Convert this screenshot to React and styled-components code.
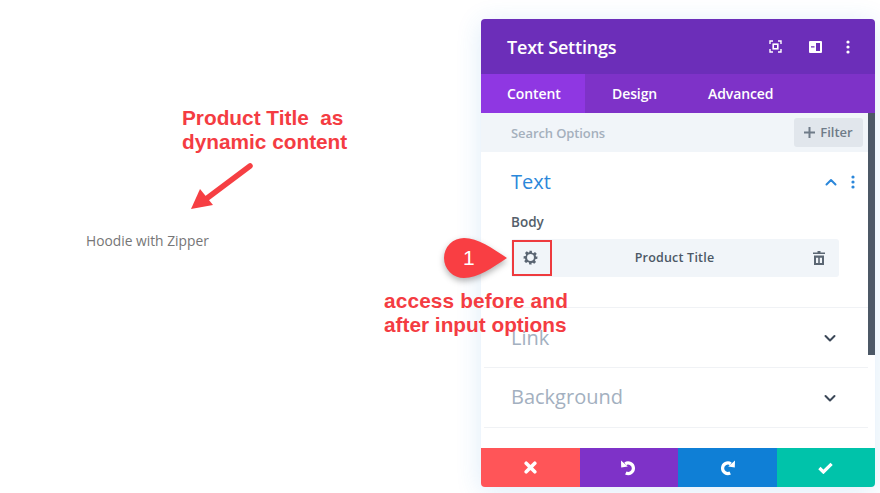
import React from "react";
import styled, { createGlobalStyle } from "styled-components";

const Global = createGlobalStyle`
  html, body { margin: 0; padding: 0; background: #fff; }
  #root { width: 880px; height: 493px; overflow: hidden; }
`;
const Page = styled.div`
  position: relative; width: 880px; height: 493px; background: #fff; overflow: hidden;
  font-family: "Open Sans", sans-serif;
`;
const Panel = styled.section`
  position: absolute; left: 481px; top: 19px; width: 394px; height: 468px;
  display: flex; flex-direction: column; border-radius: 4px; overflow: hidden;
  background: #fff; box-shadow: 0 4px 26px rgba(43,135,218,.16);
`;
const Header = styled.header`
  height: 55px; flex: none; background: #6c2eb9; display: flex; align-items: center;
  padding: 0 25px 0 26px; color: #fff;
`;
const Title = styled.h1`
  flex: 1; margin: 0; font-size: 18px; font-weight: 600; letter-spacing: -.2px;
`;
const HeaderIcons = styled.div`
  display: flex; align-items: center; gap: 27px;
  svg { display: block; }
  svg:last-child { margin-left: -3px; }
`;
const Tabs = styled.nav`height: 39px; flex: none; background: #7e32c8; display: flex;`;
const Tab = styled.div`
  display: flex; align-items: center; color: #fff; font-size: 14px; font-weight: 600; letter-spacing: -.1px;
  padding: ${p => p.$active ? "0 26px" : "0 27px"};
  width: ${p => p.$w}px; box-sizing: border-box;
  background: ${p => p.$active ? "#8f37e2" : "transparent"};
`;
const Scroller = styled.div`flex: 1; position: relative; min-height: 0; display: flex; flex-direction: column;`;
const Thumb = styled.div`
  position: absolute; right: 0; top: 0; width: 7px; height: 242px; background: #4c5866;
`;
const SearchBar = styled.div`
  height: 39px; flex: none; box-sizing: border-box; margin-right: 7px; background: #f1f5f9;
  display: flex; align-items: center; justify-content: space-between; padding: 0 5px 0 30px;
`;
const SearchText = styled.span`font-size: 13px; font-weight: 600; color: #a5b0bd; letter-spacing: -.1px;`;
const Filter = styled.div`
  width: 69px; height: 29px; border-radius: 3px; background: #e1e6ec; color: #6f7b88;
  display: flex; align-items: center; justify-content: center; gap: 5px;
  font-size: 13px; font-weight: 600; position: relative; top: -.5px;
`;
const Group = styled.div`
  margin: 0 7px 0 3px; border-bottom: 1px solid #f0f2f5; box-sizing: border-box;
  height: ${p => p.$h}px; padding: 0 0 0 27px; flex: none;
`;
const GroupHead = styled.div`
  display: flex; align-items: center; justify-content: space-between; height: ${p => p.$h}px;
  padding-right: ${p => p.$pr}px;
`;
const GroupTitle = styled.h2`
  margin: 0 0 ${p => p.$active ? 0 : 2}px; font-size: 20px; font-weight: 400;
  color: ${p => p.$active ? "#2b87da" : "#a3b0c0"};
`;
const HeadIcons = styled.div`display: flex; align-items: center; gap: 14px; svg { display: block; }`;
const Label = styled.div`font-size: 13.5px; font-weight: 600; color: #555f6b; margin-top: 2px; height: 18px; line-height: 18px;`;
const InputRow = styled.div`
  margin-top: 8px; height: 38px; width: 328px; background: #f1f5f9; border-radius: 3px;
  display: flex; align-items: center; box-sizing: border-box; padding-bottom: 2px;
`;
const InputIcon = styled.div`
  width: 39px; flex: none; display: flex; align-items: center; justify-content: center;
  svg { display: block; }
`;
const InputText = styled.div`
  flex: 1; text-align: center; font-size: 12.5px; font-weight: 600; color: #4c5866; letter-spacing: .2px;
`;
const Trash = styled.div`width: 40px; display: flex; justify-content: center; margin-top: 2px; svg { display: block; }`;
const Footer = styled.footer`height: 39px; flex: none; display: flex;`;
const FootBtn = styled.div`
  flex: 1; display: flex; align-items: center; justify-content: center; background: ${p => p.$bg};
  svg { display: block; }
`;
const RedBox = styled.div`
  position: absolute; left: 512px; top: 240px; width: 40px; height: 36px; box-sizing: border-box;
  border: 2.5px solid #ee3a3e;
`;
const Note = styled.div`
  position: absolute; left: ${p => p.$x}px; top: ${p => p.$y}px; color: #f43c42;
  font-family: "Liberation Sans", Arial, sans-serif; font-weight: 700; white-space: pre;
  font-size: 20.8px; line-height: 24px;
`;
const NoteLine = styled.div`letter-spacing: ${p => p.$ls || 0}px;`;
const Product = styled.div`
  position: absolute; left: 86px; top: 232px; font-size: 13.8px; line-height: 18px; color: #767676;
`;
const Arrow = styled.svg`position: absolute; left: 185px; top: 158px;`;
const Bubble = styled.svg`position: absolute; left: 440px; top: 234px; overflow: visible;`;
const BubbleNum = styled.div`
  position: absolute; left: 463px; top: 246px; color: #fff; font-family: "Liberation Sans", Arial, sans-serif;
  font-size: 21px; line-height: 24px;
`;

const Chevron = ({ up, color = "#3c4858" }) => (
  <svg width="12" height="8" viewBox="0 0 12 8" fill="none" stroke={color} strokeWidth="2" strokeLinecap="round" strokeLinejoin="round">
    <path d={up ? "M1.5 6.5 6 2l4.5 4.5" : "M1.5 2 6 6.5 10.5 2"} />
  </svg>
);
const Dots = ({ color = "#fff" }) => (
  <svg width="4" height="14" viewBox="0 0 4 14" fill={color}>
    <circle cx="2" cy="2" r="1.6" /><circle cx="2" cy="7" r="1.6" /><circle cx="2" cy="12" r="1.6" />
  </svg>
);

export default function App() {
  return (
    <Page>
      <Global />
      <Note $x={182} $y={106}>
        <NoteLine>{"Product Title  as"}</NoteLine>
        <NoteLine>dynamic content</NoteLine>
      </Note>
      <Arrow width="72" height="56" viewBox="0 0 72 56">
        <path d="M65 8 21 41" stroke="#f63f43" strokeWidth="5.5" strokeLinecap="round" fill="none" />
        <path d="M6 51 15 31 28 47Z" fill="#f63f43" />
      </Arrow>
      <Product>Hoodie with Zipper</Product>
      <Panel>
        <Header>
          <Title>Text Settings</Title>
          <HeaderIcons>
            <svg width="13" height="13" viewBox="0 0 13 13" fill="none" stroke="#fff" strokeWidth="1.4">
              <path d="M1 4V1h3M9 1h3v3M12 9v3H9M4 12H1V9" />
              <rect x="4.2" y="4.2" width="4.6" height="4.6" strokeWidth="1.6" />
            </svg>
            <svg width="13" height="12" viewBox="0 0 13 12">
              <path fillRule="evenodd" fill="#fff" d="M1 0h11a1 1 0 0 1 1 1v10a1 1 0 0 1-1 1H1a1 1 0 0 1-1-1V1a1 1 0 0 1 1-1Zm1 5.3v1.2h3.5V5.3ZM7 2v8h4V2Z" />
            </svg>
            <Dots />
          </HeaderIcons>
        </Header>
        <Tabs>
          <Tab $active $w={104}>Content</Tab>
          <Tab $w={96}>Design</Tab>
          <Tab $w={160}>Advanced</Tab>
        </Tabs>
        <Scroller>
          <Thumb />
          <SearchBar>
            <SearchText>Search Options</SearchText>
            <Filter>
              <svg width="11" height="11" viewBox="0 0 11 11" stroke="#6f7b88" strokeWidth="2"><path d="M5.5 0v11M0 5.5h11" /></svg>
              Filter
            </Filter>
          </SearchBar>
          <Group $h={156}>
            <GroupHead $h={59} $pr={13}>
              <GroupTitle $active>Text</GroupTitle>
              <HeadIcons>
                <Chevron up color="#2b87da" />
                <Dots color="#2b87da" />
              </HeadIcons>
            </GroupHead>
            <Label>Body</Label>
            <InputRow>
              <InputIcon>
                <svg width="15" height="15" viewBox="0 0 24 24" fill="#5b6673">
                  <path fillRule="evenodd" d="M10 1h4l.6 3.2 1.9.8 2.7-1.8 2.8 2.8-1.8 2.7.8 1.9L23 10v4l-3.2.6-.8 1.9 1.8 2.7-2.8 2.8-2.7-1.8-1.9.8L14 23h-4l-.6-3.2-1.9-.8-2.7 1.8-2.8-2.8 1.8-2.7-.8-1.9L1 14v-4l3.2-.6.8-1.9L3.2 4.8 6 2l2.7 1.8 1.9-.8L10 1Zm2 5.500a5.500 5.500 0 1 0 0 11 5.500 5.500 0 0 0 0-11Z" />
                </svg>
              </InputIcon>
              <InputText>Product Title</InputText>
              <Trash>
                <svg width="12" height="14" viewBox="0 0 12 14" fill="#5b6673">
                  <path fillRule="evenodd" d="M4.5 0h3v1.5H12v1.6H0V1.5h4.5ZM1 4.6h10V14H1Zm2 2.2V12h2.2V6.800Zm3.800 0V12H9V6.800Z" />
                </svg>
              </Trash>
            </InputRow>
          </Group>
          <Group $h={60}>
            <GroupHead $h={60} $pr={32}>
              <GroupTitle>Link</GroupTitle>
              <Chevron />
            </GroupHead>
          </Group>
          <Group $h={60}>
            <GroupHead $h={59} $pr={32}>
              <GroupTitle>Background</GroupTitle>
              <Chevron />
            </GroupHead>
          </Group>
        </Scroller>
        <Footer>
          <FootBtn $bg="#ff5558">
            <svg width="13" height="13" viewBox="0 0 13 13" stroke="#fff" strokeWidth="3.6" strokeLinecap="round"><path d="M2.200 2.200l8.600 8.600M10.800 2.200l-8.600 8.600" /></svg>
          </FootBtn>
          <FootBtn $bg="#7e32c8">
            <svg width="17" height="17" viewBox="0 0 17 17" fill="none">
              <path d="M5.200 4.800A5.300 5.300 0 1 1 5.800 14" stroke="#fff" strokeWidth="3.200" />
              <path d="M1 1.600 1.200 8.400l6.600-1Z" fill="#fff" />
            </svg>
          </FootBtn>
          <FootBtn $bg="#0f7fd6">
            <svg width="17" height="17" viewBox="0 0 17 17" fill="none">
              <path d="M11.800 4.800A5.300 5.300 0 1 0 11.200 14" stroke="#fff" strokeWidth="3.200" />
              <path d="M16 1.600 15.800 8.400l-6.600-1Z" fill="#fff" />
            </svg>
          </FootBtn>
          <FootBtn $bg="#00c3aa">
            <svg width="15" height="12" viewBox="0 0 15 12" fill="none" stroke="#fff" strokeWidth="3.200"><path d="M1.400 6 5.400 10 13.600 1.800" /></svg>
          </FootBtn>
        </Footer>
      </Panel>
      <Bubble width="72" height="46" viewBox="0 0 72 46">
        <path d="M24 4C38 4 52 14 67 24 52 34 38 44 24 44A20 20 0 0 1 24 4Z" fill="#f93e43" style={{ filter: "drop-shadow(0 3px 3px rgba(0,0,0,.3))" }} />
      </Bubble>
      <BubbleNum>1</BubbleNum>
      <RedBox />
      <Note $x={384} $y={289}>
        <NoteLine $ls={0.15}>access before and</NoteLine>
        <NoteLine>after input options</NoteLine>
      </Note>
    </Page>
  );
}
